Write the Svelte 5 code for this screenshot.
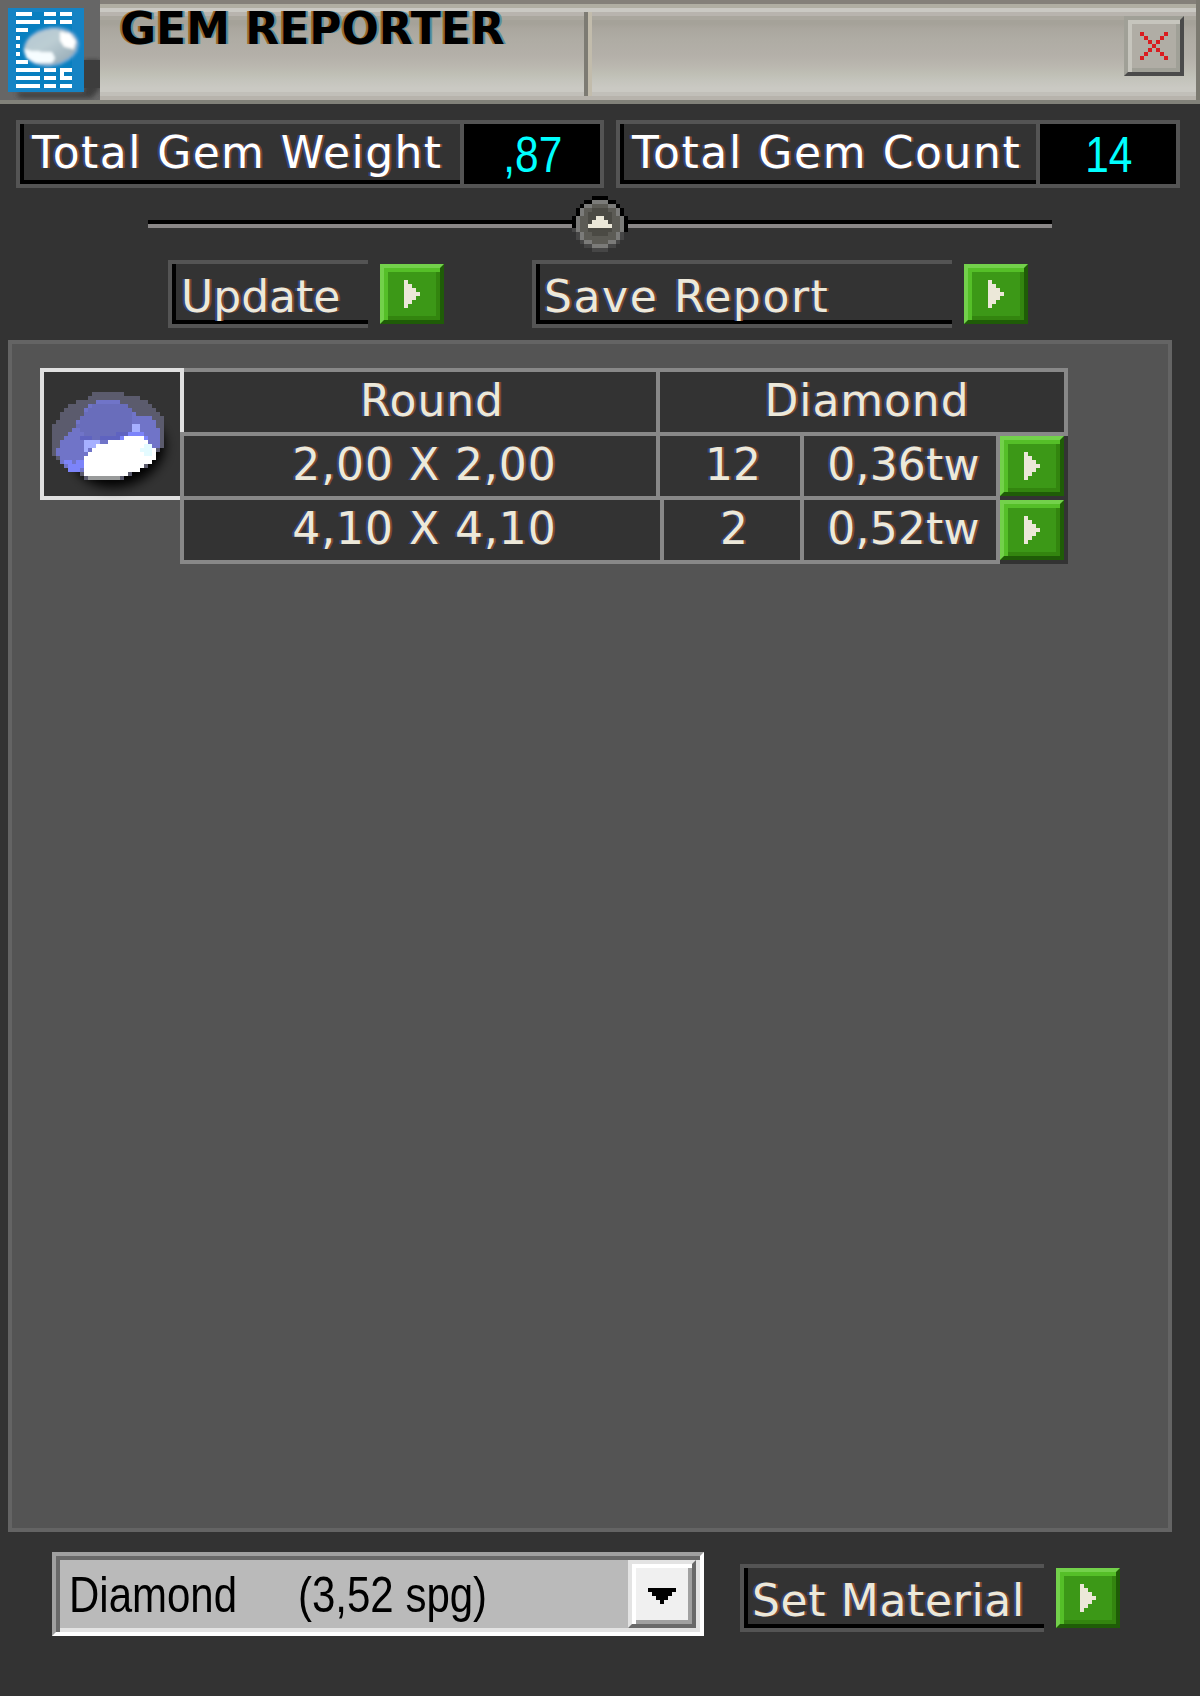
<script>
  const rows = [
    { size: '2,00 X 2,00', count: '12', weight: '0,36tw' },
    { size: '4,10 X 4,10', count: '2', weight: '0,52tw' }
  ];

  // Horizontal runs of the gem thumbnail: [row, start, end]
  const body = [
    [6, 13, 21], [7, 12, 25], [8, 9, 27], [9, 7, 28], [10, 6, 29], [11, 5, 30], [12, 5, 31],
    [13, 4, 31], [14, 3, 31], [15, 3, 31], [16, 3, 31], [17, 3, 31], [18, 3, 31], [19, 3, 31],
    [20, 3, 30], [21, 3, 29], [22, 4, 29], [23, 5, 28], [24, 6, 27], [25, 7, 25], [26, 10, 23],
    [27, 11, 21]
  ];
  const facets = [
    [8, 14, 20], [9, 12, 22], [10, 11, 23], [11, 11, 24], [12, 10, 28], [13, 9, 29], [14, 9, 29],
    [15, 8, 30], [16, 7, 30], [17, 6, 30], [18, 5, 30], [19, 5, 30], [20, 4, 29], [21, 4, 14],
    [22, 5, 14], [23, 5, 13], [24, 6, 12], [25, 7, 11]
  ];
  const table = [
    [9, 13, 22], [10, 12, 23], [11, 11, 23], [12, 10, 23], [13, 10, 23], [14, 9, 23],
    [15, 10, 23], [16, 11, 22], [17, 13, 21]
  ];
  const shine = [
    [17, 21, 26], [18, 17, 27], [19, 14, 28], [20, 13, 29], [21, 12, 29], [22, 11, 29],
    [23, 11, 28], [24, 11, 26], [25, 11, 25], [26, 11, 22]
  ];
  const glints = [[14, 23, 25], [15, 23, 25], [18, 11, 15], [19, 11, 14], [20, 11, 12]];
  const glow = [[16, 22, 26], [17, 20, 21], [17, 26, 27], [23, 6, 8], [23, 9, 11], [24, 7, 11], [25, 7, 10]];
  const runs = (list) => list.map(([y, a, b]) => `M${a} ${y}h${b - a}v1h${a - b}z`).join('');
</script>

{#snippet go(label)}
  <button class="go" aria-label={label}>
    <svg viewBox="0 0 4 7"><path d="M0 0h1v1h1v1h1v1h1v1h-1v1h-1v1h-1v1h-1z" /></svg>
  </button>
{/snippet}

<main>
  <header>
    <svg class="logo" viewBox="0 0 25 25">
      <defs>
        <linearGradient id="stone" x1="0" y1="0" x2="0.6" y2="1">
          <stop offset="0" stop-color="#b4c9d3" />
          <stop offset="0.5" stop-color="#bccdd3" />
          <stop offset="1" stop-color="#9eb2bc" />
        </linearGradient>
        <filter id="shade"><feGaussianBlur stdDeviation="0.7" /></filter>
        <filter id="soft"><feGaussianBlur stdDeviation="0.35" /></filter>
      </defs>
      <rect width="25" height="25" fill="#666" />
      <path d="M21 15h4v7l-2 2.5h-18l-1-1.5h17z" fill="#3d3d3d" filter="url(#shade)" />
      <path d="M21 15h4v7h-4z" fill="#3d3d3d" />
      <path d="M2 2h19v21h-19z" fill="#1583c4" />
      <path d="M4 3h14v19h-14z" fill="#087fc0" />
      <path
        fill="#fff"
        d="M4 3h4v1h-4zM11 3h3v1h-3zM15 3h3v1h-3zM4 5h6v1h-6zM11 5h3v1h-3zM15 5h3v1h-3zM4 7h3v1h-3zM4 9h1v1h-1zM4 11h1v1h-1zM4 13h1v1h-1zM4 15h3v1h-3zM4 17h6v1h-6zM11 17h3v1h-3zM15 17h3v1h-2v1h2v1h-3zM4 19h6v1h-6zM11 19h3v1h-3zM4 21h6v1h-6zM11 21h3v1h-3zM15 21h3v1h-3z"
      />
      <g filter="url(#soft)">
        <ellipse cx="12.8" cy="11.7" rx="7" ry="4.9" transform="rotate(-10 12.8 11.7)" fill="#6fa6d2" />
        <ellipse cx="12.7" cy="11.7" rx="6.5" ry="4.3" transform="rotate(-10 12.7 11.7)" fill="url(#stone)" />
        <path d="M15 8l2.5 .3 1.5 2-.6 2-2.4-.6-1-1.7z" fill="#fff" />
        <path d="M6 12.2l2 .6 5 .2.8 1.5-.8 1.3h-4l-2.4-1.4z" fill="#f6fdff" />
      </g>
    </svg>
    <h1>GEM REPORTER</h1>
    <div class="rest">
      <button class="close" aria-label="Close">
        <svg viewBox="0 0 7 7">
          <path
            d="M0 0h1v1h-1zM1 1h1v1h-1zM2 2h1v1h-1zM3 3h1v1h-1zM4 4h1v1h-1zM5 5h1v1h-1zM6 6h1v1h-1zM6 0h1v1h-1zM5 1h1v1h-1zM4 2h1v1h-1zM2 4h1v1h-1zM1 5h1v1h-1zM0 6h1v1h-1z"
          />
        </svg>
      </button>
    </div>
  </header>

  <section class="totals">
    <div class="total weight">
      <span class="name">Total Gem Weight</span>
      <output><span>,87</span></output>
    </div>
    <div class="total count">
      <span class="name">Total Gem Count</span>
      <output><span>14</span></output>
    </div>
  </section>

  <div class="divider">
    <i></i>
    <svg viewBox="0 0 14 14">
      <path fill="#000" d="M5 0h4v1h2v1h1v1h1v2h1v4h-1v-3h-12v3h-1v-4h1v-2h1v-1h1v-1h2z" />
      <path fill="#464646" d="M0 8h1v1h12v2h-1v1h-1v1h-2v1h-4v-1h-2v-1h-1v-1h-1v-2h-1z" />
      <path fill="#7b7b79" d="M5 1h4v1h2v1h1v2h1v4h-1v2h-1v1h-2v1h-4v-1h-2v-1h-1v-2h-1v-4h1v-2h1v-1h2z" />
      <path fill="#5c5b55" d="M5 2h4v1h2v2h1v4h-1v2h-2v1h-4v-1h-2v-2h-1v-4h1v-2h2z" />
      <path fill="#4b4a44" d="M5 3h4v1h1v5h-1v1h-4v-1h-1v-5h1z" />
      <path fill="#ece8d9" d="M6 5h2v1h1v1h1v1h-6v-1h1v-1h1z" />
    </svg>
    <i></i>
  </div>

  <section class="actions">
    <span class="slot update">Update</span>
    {@render go('Update')}
    <span class="slot save">Save Report</span>
    {@render go('Save report')}
  </section>

  <section class="panel">
    <div class="thumb">
      <svg viewBox="0 0 36 33">
        <defs>
          <filter id="drop" x="-30%" y="-30%" width="160%" height="160%"><feGaussianBlur stdDeviation="1.4" /></filter>
        </defs>
        <ellipse cx="20" cy="21" rx="11.5" ry="8.5" transform="rotate(-18 20 21)" fill="#000" filter="url(#drop)" />
        <path fill="#5b5b6d" d={runs(body)} />
        <path fill="#7074c8" d={runs(facets)} />
        <path fill="#696dbb" d={runs(table)} />
        <path fill="#5f63c0" d="M10 17h3v1h-3zM15 17h5v1h-5zM19 16h3v1h-3z" />
        <path fill="#7c84fa" d={runs(glow)} />
        <path fill="#a6b0ff" d={runs(glints)} />
        <path fill="#fff" d={runs(shine)} />
        <path fill="#e4fbff" d="M26 19h2v3h-2zM25 20h1v1h-1z" />
        <path fill="#989a9a" d="M12 27h8v1h-8z" />
      </svg>
    </div>
    <div class="gems">
      <div class="row head">
        <span class="cell shape">Round</span>
        <span class="cell material">Diamond</span>
      </div>
      {#each rows as row}
        <div class="row">
          <span class="cell shape">{row.size}</span>
          <span class="cell qty">{row.count}</span>
          <span class="cell tw">{row.weight}</span>
          {@render go('Select ' + row.size)}
        </div>
      {/each}
    </div>
  </section>

  <footer>
    <div class="select">
      <span class="chosen"><span class="mat">Diamond</span><span class="spg">(3,52 spg)</span></span>
      <button class="drop" aria-label="Open list">
        <svg viewBox="0 0 7 4"><path d="M0 0h7v1h-1v1h-1v1h-1v1h-1v-1h-1v-1h-1v-1h-1z" /></svg>
      </button>
    </div>
    <span class="slot set">Set Material</span>
    {@render go('Set material')}
  </footer>
</main>

<style>
  :global(body) {
    margin: 0;
    background: #333;
  }
  main {
    width: 1200px;
    height: 1696px;
    overflow: hidden;
    background: #333;
    color: #ece8d9;
    font: 44px/58px 'DejaVu Sans', sans-serif;
    white-space: nowrap;
  }
  main,
  main * {
    box-sizing: border-box;
  }
  button {
    display: flex;
    align-items: flex-start;
    padding: 0;
    border: 0;
    border-radius: 0;
    flex: none;
  }
  svg {
    display: block;
    flex: none;
    shape-rendering: crispEdges;
  }
  .name,
  .slot,
  .cell {
    text-shadow: -2px 0 #34467f, 2px 0 #80492f;
  }

  header {
    display: flex;
    height: 104px;
    border-bottom: 4px solid #82827a;
    background: linear-gradient(
      #848079 0 4px, #b0aea2 4px 8px, #cac9c3 8px 12px, #b8b4ae 12px 16px, #aaa79e 16px 20px,
      #a5a299 20px 24px, #aaa69e 28px, #afaca4 40px, #b4b0a9 56px, #bab7af 66px, #bfbfb5 74px,
      #c4c4bc 80px, #cac9c3 88px 92px, #c1bfb9 92px 96px, #b7b3ac 96px
    );
  }
  .logo {
    width: 100px;
    height: 100px;
  }
  h1 {
    width: 492px;
    height: 84px;
    margin: 12px 0 0;
    padding-left: 20px;
    border-right: 4px solid #c2bcac;
    box-shadow: inset -4px 0 #7d7b73;
    color: #000;
    font: bold 44px/34px 'DejaVu Sans', sans-serif;
    text-shadow: -2px 0 #9a6a2e, 2px 0 #5a8f9e;
  }
  .rest {
    flex: 1;
    display: flex;
    justify-content: flex-end;
    padding: 16px 12px 0 0;
    border-right: 4px solid #7b7970;
  }
  .close {
    width: 60px;
    height: 60px;
    padding: 12px 0 0 12px;
    border: 4px solid;
    border-color: #a0a097 #4a4a4a #4a4a4a #a0a097;
    background: #b0ada5;
    box-shadow: inset 4px 4px #c6c5bd, inset -4px -4px #a0a097;
  }
  .close svg {
    width: 28px;
    height: 28px;
    fill: #d91c20;
  }

  .totals {
    display: flex;
    gap: 12px;
    padding: 16px 0 0 16px;
  }
  .total {
    display: flex;
    height: 68px;
    border: 4px solid #545454;
  }
  .total .name {
    height: 60px;
    border-left: 4px solid #000;
    border-bottom: 4px solid #000;
    padding-left: 8px;
    color: #fff;
    letter-spacing: 1.4px;
  }
  .weight {
    width: 588px;
  }
  .weight .name {
    width: 440px;
  }
  .count {
    width: 564px;
  }
  .total.count .name {
    width: 416px;
    letter-spacing: 1.6px;
  }
  output {
    width: 140px;
    border-left: 4px solid #545454;
    background: #000;
    color: #0ff;
    font: 50px/62px 'Liberation Sans', sans-serif;
    text-align: center;
  }
  output span {
    display: inline-block;
    transform: translateX(1px) scaleX(0.85);
  }

  .divider {
    display: flex;
    align-items: flex-start;
    width: 904px;
    height: 56px;
    margin: 8px 0 0 148px;
  }
  .divider i {
    flex: 1;
    height: 8px;
    margin-top: 24px;
    background: linear-gradient(#000 50%, #8a8787 50%);
  }
  .divider svg {
    width: 56px;
    height: 56px;
  }

  .actions {
    display: flex;
    height: 68px;
    margin: 8px 0 0 168px;
  }
  .slot {
    flex: none;
    height: 68px;
    padding-left: 8px;
    border: solid #545454;
    border-width: 4px 0 4px 4px;
    box-shadow: inset 4px -4px #000;
    line-height: 66px;
  }
  .update {
    width: 200px;
    margin-right: 12px;
    padding-left: 9px;
  }
  .save {
    width: 420px;
    margin: 0 12px 0 88px;
    letter-spacing: 1.6px;
  }
  .go {
    width: 64px;
    height: 60px;
    padding: 12px 0 0 20px;
    border: 4px solid;
    border-color: #73d14b #1f5c07 #1f5c07 #73d14b;
    background: #3c9817;
    box-shadow: inset 4px 4px #55bf28, inset -4px -4px #33850f;
  }
  .actions .go,
  footer .go {
    margin-top: 4px;
  }
  .go svg {
    width: 16px;
    height: 28px;
    fill: #ece8d9;
  }

  .panel {
    display: flex;
    width: 1164px;
    height: 1192px;
    margin: 12px 0 0 8px;
    padding: 24px 0 0 28px;
    border: 4px solid #646464;
    background: #545454;
  }
  .thumb {
    flex: none;
    width: 144px;
    height: 132px;
    border: 4px solid #e0e0e0;
    background: #333;
  }
  .thumb svg {
    width: 144px;
    height: 132px;
    margin: -4px;
  }
  .gems {
    width: 888px;
    margin-left: -4px;
  }
  .row {
    display: flex;
    height: 64px;
    border-left: 4px solid #888;
    background: #333;
  }
  .row.head {
    height: 68px;
    margin: 0 0 0 4px;
    border: solid #888;
    border-width: 4px 4px 4px 0;
  }
  .head + .row {
    box-shadow: 0 -4px #888;
  }
  .cell {
    flex: none;
    padding-left: 6px;
    border: solid #888;
    border-width: 0 4px 4px 0;
    text-align: center;
  }
  .shape {
    width: 476px;
    padding-left: 9px;
    letter-spacing: 0.95px;
  }
  .row:last-child .shape {
    width: 480px;
    padding-left: 5px;
  }
  .row:last-child .qty {
    width: 140px;
    padding-left: 4px;
  }
  .head .cell {
    border-bottom: 0;
  }
  .head .shape {
    padding-left: 24px;
  }
  .head .material {
    width: 404px;
    padding-left: 10px;
    border: 0;
    letter-spacing: 0.9px;
  }
  .qty {
    width: 144px;
  }
  .tw {
    width: 196px;
    padding-left: 7px;
    letter-spacing: 0.2px;
  }

  footer {
    display: flex;
    align-items: flex-start;
    margin: 20px 0 0 52px;
  }
  .select {
    display: flex;
    flex: none;
    width: 652px;
    height: 84px;
    padding: 4px;
    border: 4px solid;
    border-color: #a0a0a0 #fff #fff #a0a0a0;
    background: #bababa;
    box-shadow: inset 4px 4px #696969, inset -4px -4px #e3e3e3;
    color: #000;
    font: 50px/70px 'Liberation Sans', sans-serif;
  }
  .chosen {
    flex: 1;
    display: flex;
    padding-left: 9px;
  }
  .chosen span {
    width: 229px;
    transform: scaleX(0.84);
    transform-origin: 0 0;
  }
  .drop {
    width: 68px;
    height: 68px;
    padding: 24px 0 0 16px;
    border: 4px solid;
    border-color: #e3e3e3 #696969 #696969 #e3e3e3;
    background: #f0f0f0;
    box-shadow: inset 4px 4px #fff, inset -4px -4px #a0a0a0;
  }
  .drop svg {
    width: 28px;
    height: 16px;
  }
  .set {
    width: 304px;
    margin: 12px 12px 0 36px;
    letter-spacing: 0.65px;
  }
  footer .go {
    margin-top: 16px;
  }
</style>
